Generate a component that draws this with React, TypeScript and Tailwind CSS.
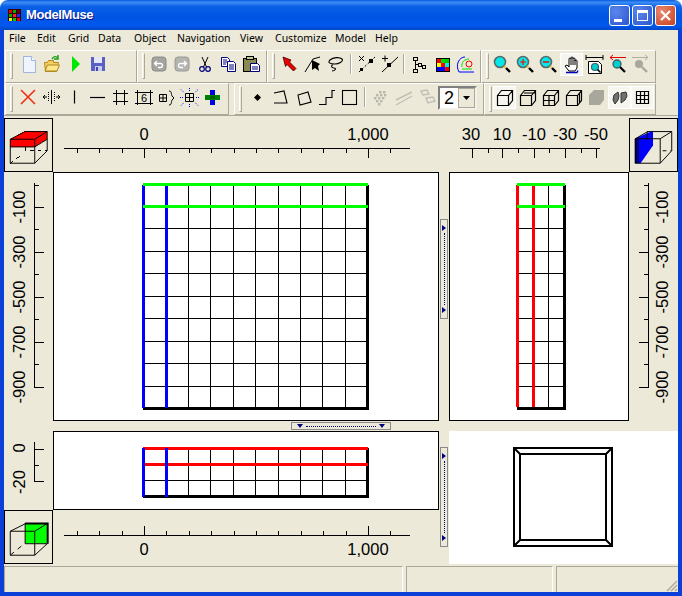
import type { ReactNode } from 'react';

const menuItems: [string, string][] = [
  ['File', 'w-[28px]'],
  ['Edit', 'w-[31px]'],
  ['Grid', 'w-[30px]'],
  ['Data', 'w-[36px]'],
  ['Object', 'w-[43px]'],
  ['Navigation', 'w-[63px]'],
  ['View', 'w-[35px]'],
  ['Customize', 'w-[60px]'],
  ['Model', 'w-[40px]'],
  ['Help', 'w-[30px]'],
];

const blk = { stroke: '#000', fill: 'none' };
const navy = { stroke: '#00007B', fill: 'none' };

function Mag({ lens = '#00E8E8', ring = '#5A6A6A', handle = '#000' }: { lens?: string; ring?: string; handle?: string }) {
  return (
    <>
      <circle cx="9" cy="9" r="5.5" fill={lens} stroke={ring} strokeWidth="1.6" />
      <path d="M13 13l1.5 1.5" stroke="#E8C030" strokeWidth="2" />
      <path d="M15 15l4 4" stroke={handle} strokeWidth="2.4" />
    </>
  );
}

const icons: Record<string, ReactNode> = {
  new: (
    <>
      <path d="M5.5 3.5h8l4 4v12h-12z" fill="#F0F4FD" stroke="#9FB4E0" />
      <path d="M13.5 3.5v4h4" fill="#fff" stroke="#9FB4E0" />
    </>
  ),
  open: (
    <>
      <path d="M3.5 9.5h3l1-2h5v2h5l-2 9h-11z" fill="#F5D060" stroke="#B08A20" />
      <path d="M4 18l2.5-6h12l-2.5 6z" fill="#FBE68A" stroke="#B08A20" />
      <path d="M11 6c2-3 4-3 6-1M17 2v4h-4" stroke="#18A018" strokeWidth="1.4" fill="none" />
    </>
  ),
  run: <polygon points="8,3 16,11 8,19" fill="#00E800" />,
  save: (
    <>
      <path d="M4 4h14v14H4z" fill="#5A60C4" />
      <rect x="7" y="4" width="8" height="6" fill="#E6E8F8" />
      <rect x="8" y="13" width="7" height="5" fill="#C8CCEC" />
      <rect x="9" y="14" width="2" height="4" fill="#4048A8" />
    </>
  ),
  undo: (
    <>
      <rect x="4" y="4" width="14" height="14" rx="3" fill="#A4A4A0" stroke="#8A8A86" />
      <path d="M9 8L6.5 10.5 9 13M7 10.5h5.5a2 2 0 0 1 0 4H10" stroke="#fff" strokeWidth="1.3" fill="none" />
    </>
  ),
  redo: (
    <>
      <rect x="4" y="4" width="14" height="14" rx="3" fill="#B4B4B0" stroke="#9A9A96" />
      <path d="M13 8l2.5 2.5L13 13M15 10.5H9.5a2 2 0 0 0 0 4H12" stroke="#fff" strokeWidth="1.3" fill="none" />
    </>
  ),
  cut: (
    <>
      <path d="M8 4l4.5 10M14 4L9.5 14" {...blk} />
      <circle cx="8" cy="16" r="2.3" {...navy} strokeWidth="1.2" />
      <circle cx="14" cy="16" r="2.3" {...navy} strokeWidth="1.2" />
    </>
  ),
  copy: (
    <>
      <path d="M4.5 4.5h6l2 2v7h-8z" fill="#fff" stroke="#00007B" />
      <path d="M6 7h4M6 9h4M6 11h3" stroke="#00007B" />
      <path d="M10.5 8.5h6l2 2v8h-8z" fill="#fff" stroke="#00007B" />
      <path d="M12 12h5M12 14h5M12 16h5" stroke="#00007B" />
    </>
  ),
  paste: (
    <>
      <rect x="3.5" y="5.5" width="13" height="13" fill="#8A8A50" stroke="#000" />
      <rect x="6.5" y="3.5" width="7" height="3" fill="#C8C8A0" stroke="#000" />
      <path d="M10.5 10.5h7l2 2v6h-9z" fill="#fff" stroke="#00007B" />
      <path d="M12 14h6M12 16h6" stroke="#00007B" />
    </>
  ),
  arrow: <polygon points="5,4 13,7 11.5,9 18,15.5 15.5,18 9,11.5 7.5,13.5" fill="#E80000" stroke="#400000" strokeWidth="0.8" />,
  lineArrow: (
    <>
      <path d="M19 4l-7 2-8 13" {...blk} />
      <polygon points="11,7 11,17 14,15 18,18 17,13 19,11" fill="#000" />
    </>
  ),
  lasso: (
    <path d="M6 7c3-3 10-3 12-1s-3 5-7 5-8-1-5-4zM9 11c-2 2-2 4 1 4s1 3-2 3" {...blk} strokeWidth="1.1" />
  ),
  delVertex: (
    <>
      <path d="M4 19L20 4" stroke="#000" strokeDasharray="2 2" />
      <rect x="5" y="15" width="3" height="3" fill="#000" />
      <rect x="14" y="6" width="4" height="4" fill="#000" />
      <path d="M4 3l5 5M9 3L4 8" {...blk} />
    </>
  ),
  addVertex: (
    <>
      <path d="M4 19L20 4" stroke="#000" />
      <rect x="9" y="10" width="4" height="4" fill="#000" />
      <path d="M4 5.5h6M7 2.5v6" {...blk} />
    </>
  ),
  tree: (
    <>
      <rect x="6.5" y="4.5" width="4" height="3" {...blk} />
      <rect x="11.5" y="10.5" width="3" height="3" {...blk} />
      <rect x="15.5" y="12.5" width="3" height="3" {...blk} />
      <rect x="6.5" y="16.5" width="4" height="3" {...blk} />
      <path d="M8.5 7.5v9M8.5 11.5h3M14.5 13.5h1" {...blk} />
    </>
  ),
  color: (
    <>
      <rect x="6" y="5" width="14" height="14" fill="#000" />
      <rect x="7" y="6" width="4" height="4" fill="#F00" />
      <rect x="11" y="6" width="4" height="4" fill="#0D0" />
      <rect x="15" y="6" width="4" height="4" fill="#0C0" />
      <rect x="7" y="10" width="4" height="4" fill="#FF0" />
      <rect x="11" y="10" width="4" height="4" fill="#F00" />
      <rect x="15" y="10" width="4" height="4" fill="#0EE" />
      <rect x="7" y="14" width="4" height="4" fill="#00F" />
      <rect x="11" y="14" width="4" height="4" fill="#00F" />
      <rect x="15" y="14" width="4" height="4" fill="#E00" />
    </>
  ),
  contour: (
    <>
      <path d="M6 19C2 12 6 4 12 4" stroke="#0000FF" fill="none" />
      <path d="M6 19h15" stroke="#0000FF" />
      <path d="M9 14c-1-5 3-8 7-8M9 16h10" stroke="#00E000" fill="none" />
      <circle cx="16" cy="11" r="3" stroke="#F00" fill="none" />
    </>
  ),
  zoom: <Mag />,
  zoomIn: (
    <>
      <Mag />
      <path d="M6 9h6M9 6v6" stroke="#F00" strokeWidth="1.2" />
    </>
  ),
  zoomOut: (
    <>
      <Mag />
      <path d="M6 9h6" stroke="#F00" strokeWidth="1.4" />
    </>
  ),
  hand: (
    <>
      <path d="M5 13l2-1 2 2V6a1 1 0 0 1 2 0V5a1 1 0 0 1 2 0v1a1 1 0 0 1 2 0v2a1 1 0 0 1 2 0v7l-2 3H9z" fill="#fff" stroke="#000" />
      <path d="M11 6v6M13 6v6M15 7v5" {...blk} />
      <path d="M6 19.5h11l1-2" stroke="#0000C0" fill="none" strokeWidth="1.3" />
    </>
  ),
  zoomExtents: (
    <>
      <path d="M3 4.5h17M3 2v5M20 2v5" {...blk} />
      <path d="M5.5 8.5h10l3 3v9h-13z" fill="#fff" stroke="#000" />
      <circle cx="12" cy="14" r="3.5" fill="#00D0D0" stroke="#406060" strokeWidth="1.2" />
      <path d="M14.5 16.5l3 3" stroke="#000" strokeWidth="1.6" />
    </>
  ),
  zoomPrev: (
    <>
      <path d="M4 4.5h16M7 2L4 4.5 7 7" stroke="#E00000" fill="none" />
      <circle cx="11" cy="11" r="4" fill="#00D0D0" stroke="#406060" strokeWidth="1.3" />
      <path d="M14 14l5 5" stroke="#000" strokeWidth="2.2" />
    </>
  ),
  zoomNext: (
    <>
      <path d="M3 4.5h16M16 2l3 2.5L16 7" stroke="#B0AFA4" fill="none" />
      <circle cx="10" cy="11" r="4" fill="#A8A79C" />
      <path d="M13 14l5 5" stroke="#A8A79C" strokeWidth="2.4" />
    </>
  ),
  del: <path d="M4 4l14 14M18 4L4 18" stroke="#F03010" strokeWidth="1.6" />,
  splitV: (
    <>
      <path d="M11.5 4v14" {...blk} />
      <path d="M8.5 6v10M14.5 6v10" stroke="#000" strokeDasharray="1 1" />
      <path d="M3 11h4M5 9l-2 2 2 2M16 11h4M18 9l2 2-2 2" {...blk} />
    </>
  ),
  vLine: <path d="M11.5 4.5v13" stroke="#000" strokeWidth="1.2" />,
  hLine: <path d="M4 11.5h15" stroke="#000" strokeWidth="1.2" />,
  hash: <path d="M7.5 4v15M15.5 4v15M4 7.5h15M4 15.5h15" {...blk} />,
  gridNum: (
    <>
      <path d="M5.5 4v15M18.5 4v15M3 6.5h18M3 17.5h18" {...blk} />
      <text x="12" y="16" textAnchor="middle" fontSize="11" fontFamily="Liberation Sans">6</text>
    </>
  ),
  gridBrace: (
    <>
      <path d="M4.5 8.5h7v7h-7zM8 8.5v7M4.5 12h7" {...blk} />
      <path d="M14 5c3 0 2 3 3 5l2 2-2 2c-1 2 0 5-3 5" {...blk} />
    </>
  ),
  gridDash: (
    <>
      <path d="M7.5 7.5h8v8h-8zM11.5 7.5v8M7.5 11.5h8" {...blk} />
      <path d="M3 3.5l3 3M20 3.5l-3 3M3 19.5l3-3M20 19.5l-3-3M11.5 2v3M11.5 18v3M2 11.5h3M18 11.5h3" stroke="#0000FF" strokeDasharray="1 1" />
    </>
  ),
  cross: (
    <>
      <rect x="9" y="4" width="5" height="15" fill="#0000E0" />
      <rect x="4" y="9" width="15" height="5" fill="#008000" />
      <rect x="9" y="10" width="5" height="3" fill="#006000" />
    </>
  ),
  dot: <polygon points="11.5,8 15,11.5 11.5,15 8,11.5" fill="#000" />,
  openPoly: <path d="M5 7l10-2 3 12H5" {...blk} strokeWidth="1.1" />,
  closedPoly: <path d="M6 9l10-3 3 10-11 3z" {...blk} strokeWidth="1.1" />,
  step: <path d="M4 18.5h7v-7h6v-7h3" {...blk} strokeWidth="1.1" />,
  square: <rect x="4.5" y="4.5" width="14" height="14" {...blk} strokeWidth="1.1" />,
  grayDots: (
    <g fill="#B8B7AC">
      {[[10, 5], [14, 5], [7, 8], [11, 8], [15, 8], [5, 11], [9, 11], [13, 11], [7, 14], [11, 14], [9, 17]].map(([x, y]) => (
        <rect key={`${x}-${y}`} x={x} y={y} width="2.4" height="2.4" />
      ))}
    </g>
  ),
  grayLines: <path d="M4 14L20 6M4 19L20 10" stroke="#C0BFB4" strokeWidth="1.4" />,
  grayRects: <path d="M6 5l6-1 2 4-6 1zM11 12l7-1 2 4-7 2z" stroke="#C0BFB4" fill="none" strokeWidth="1.4" />,
  cube: (
    <path d="M4.5 9.5h11v10h-11zM4.5 9.5l4-5h11v10l-4 5M15.5 9.5l4-5" {...blk} strokeWidth="1.2" />
  ),
  cubeLeft: (
    <path d="M4.5 9.5h11v10h-11zM4.5 9.5l4-5h11v10l-4 5M15.5 9.5l4-5M8 7h11" {...blk} strokeWidth="1.2" />
  ),
  cubeCross: (
    <path d="M4.5 9.5h11v10h-11zM4.5 9.5l4-5h11v10l-4 5M15.5 9.5l4-5M4.5 14.5h11M10 9.5v10" {...blk} strokeWidth="1.2" />
  ),
  cubeSide: (
    <path d="M4.5 9.5h11v10h-11zM4.5 9.5l4-5h11v10l-4 5M15.5 9.5l4-5M17.5 7v10" {...blk} strokeWidth="1.2" />
  ),
  cubeSolid: <polygon points="4,9 9,4 19,4 19,14 15,19 4,19" fill="#A8A79C" />,
  blob: (
    <path d="M6 9l4-3 1 4-1 4-3 4-2-4zM13 7l5-1 1 4-2 4-4 3v-5z" fill="#707070" stroke="#333" />
  ),
  meshGrid: <path d="M5.5 5.5h12v12h-12zM9.5 5.5v12M13.5 5.5v12M5.5 9.5h12M5.5 13.5h12" {...blk} strokeWidth="1.2" />,
};

function Btn({ icon, pressed }: { icon: string; pressed?: boolean }) {
  return (
    <div className={`w-[23px] h-[23px] shrink-0 ${pressed ? 'bg-[#F6F5EE] outline outline-1 -outline-offset-1 outline-white' : ''}`}>
      <svg viewBox="0 0 23 23" className="w-[23px] h-[23px]">
        {icons[icon]}
      </svg>
    </div>
  );
}

function Grip() {
  return <div className="w-[3px] h-[26px] mt-[2px] shrink-0 border-l border-t border-white border-r border-b border-r-[#ACA899] border-b-[#ACA899]" />;
}

function Sep({ w }: { w: string }) {
  return (
    <div className={`${w} h-[23px] shrink-0 flex justify-center`}>
      <div className="w-[2px] h-[20px] mt-[1px] border-l border-[#ACA899] border-r-white bg-white" />
    </div>
  );
}

function Band({ width, lead, children }: { width: string; lead: string; children: ReactNode }) {
  return (
    <div className={`${width} h-full shrink-0 flex items-start border border-t-white border-l-white border-r-[#ACA899] border-b-[#ACA899]`}>
      <div className={`${lead} h-full shrink-0 pl-[4px]`}>
        <Grip />
      </div>
      <div className="flex items-start mt-[2px]">{children}</div>
    </div>
  );
}

// hand-placed ruler ticks, screen coords via the viewBox
const hTicks = Array.from({ length: 15 }, (_, i) => ({ x: Math.round(144 + 22.4 * (i - 3)), major: i === 3 || i === 13 }));
const sideMajor = [207, 252, 297, 342, 387];
const sideMinor = [185, 229, 274, 319, 364];
const sideLabels: [string, number][] = [['-100', 207], ['-300', 252], ['-500', 297], ['-700', 342], ['-900', 387]];

function SideLabel({ x, y, children }: { x: number; y: number; children: string }) {
  return (
    <text x={x} y={y} transform={`rotate(-90 ${x} ${y})`} textAnchor="middle" fontSize="16.5">
      {children}
    </text>
  );
}

function Cube({ kind }: { kind: 'top' | 'side' | 'front' }) {
  if (kind === 'top') {
    return (
      <svg viewBox="4 118 49 53" className="w-full h-full" shapeRendering="crispEdges">
        <path d="M9.5 138.5h25.5v8H9.5z" fill="#F00" />
        <polygon points="9.5,138 25,130 48,130 48,138 35,146.5 35,138" fill="#F00" />
        <path d="M9.5 138.5h25.5v25H9.5zM9.5 138.5L25 130.5h23v20L35 163.5M35 138.5L48 130.5M9.5 146.5H35M35 146.5l13-8" fill="none" stroke="#000" shapeRendering="auto" />
        <path d="M9.5 163.5L21 155M25.5 147v3.5h22" fill="none" stroke="#000" strokeDasharray="4 4" />
      </svg>
    );
  }
  if (kind === 'side') {
    return (
      <svg viewBox="629 118 49 53" className="w-full h-full" shapeRendering="auto">
        <polygon points="634,138 652,130 653,130 653,145 640,163.5 634,163.5" fill="#00F" />
        <path d="M635 138v25.5" fill="none" stroke="#000" strokeWidth="2" />
        <path d="M637.5 137v26" fill="none" stroke="#000" />
        <path d="M634.5 138h26v25.5h-26M647 130.5h25.5v20L660.5 163.5M660.5 138l12-7.5M634.5 138l13-7.5M647 130.5v8" fill="none" stroke="#000" />
        <path d="M663 150.5h9" fill="none" stroke="#000" strokeDasharray="4 4" />
      </svg>
    );
  }
  return (
    <svg viewBox="4 510 49 53" className="w-full h-full" shapeRendering="auto">
      <rect x="25" y="522" width="23" height="21" fill="#0F0" />
      <path d="M25 522.5h23.5v21" fill="none" stroke="#000" strokeWidth="2" />
      <path d="M25 522v21.5h23" fill="none" stroke="#000" />
      <path d="M9.5 530.5h25.5v25H9.5zM9.5 530.5l16-8M35 530.5l13-8M35 555.5l13-12" fill="none" stroke="#000" />
      <path d="M9.5 555.5L21 546" fill="none" stroke="#000" strokeDasharray="5 5" />
    </svg>
  );
}

function VHandle() {
  return (
    <div className="w-[8px] h-[100px] ml-[1px] border border-[#8A8A8A] bg-[#ECE9D8] flex flex-col items-center justify-between py-[5px]">
      <svg viewBox="0 0 4 6" className="w-[4px] h-[6px] shrink-0">
        <polygon points="0,0 4,3 0,6" fill="#00007B" />
      </svg>
      <div className="flex-1 border-l border-dotted border-[#00007B] my-[2px]" />
      <svg viewBox="0 0 4 6" className="w-[4px] h-[6px] shrink-0">
        <polygon points="0,0 4,3 0,6" fill="#00007B" />
      </svg>
    </div>
  );
}

function HHandle() {
  return (
    <div className="w-[100px] h-[8px] mt-[1px] ml-[287px] border border-[#8A8A8A] bg-[#ECE9D8] flex items-center justify-between px-[5px]">
      <svg viewBox="0 0 6 4" className="w-[6px] h-[4px] shrink-0">
        <polygon points="0,0 6,0 3,4" fill="#00007B" />
      </svg>
      <div className="flex-1 border-t border-dotted border-[#00007B] mx-[3px]" />
      <svg viewBox="0 0 6 4" className="w-[6px] h-[4px] shrink-0">
        <polygon points="0,0 6,0 3,4" fill="#00007B" />
      </svg>
    </div>
  );
}

const gridYs = [228, 251, 273, 296, 318, 341, 363, 386];
const gridXs = [188, 210, 233, 255, 278, 300, 322, 345];

export default function App() {
  return (
    <div className="w-[682px] h-[596px] bg-white flex flex-col overflow-hidden font-['Liberation_Sans',sans-serif] text-black">
      {/* title bar */}
      <div className="h-[30px] shrink-0 rounded-t-[8px] flex items-center pl-[7px] pr-[6px] bg-[linear-gradient(180deg,#0A5CDC_0%,#3C8CF6_8%,#0A5FE6_22%,#0054E3_55%,#0058EE_85%,#0046C8_100%)]">
        <svg viewBox="0 0 16 14" className="w-[16px] h-[14px] shrink-0" shapeRendering="crispEdges">
          <rect x="1" y="1" width="13" height="12" fill="#300" />
          <rect x="2" y="2" width="3" height="3" fill="#E00" />
          <rect x="6" y="2" width="3" height="3" fill="#0A0" />
          <rect x="10" y="2" width="3" height="3" fill="#600" />
          <rect x="2" y="6" width="3" height="3" fill="#0A0" />
          <rect x="6" y="6" width="3" height="3" fill="#F22" />
          <rect x="10" y="6" width="3" height="3" fill="#22E" />
          <rect x="2" y="10" width="3" height="3" fill="#FE0" />
          <rect x="6" y="10" width="3" height="3" fill="#0C0" />
          <rect x="10" y="10" width="3" height="3" fill="#E00" />
        </svg>
        <span className="ml-[3px] flex-1 text-white font-bold text-[13px] tracking-[-0.4px] [text-shadow:1px_1px_#0F1089]">ModelMuse</span>
        <div className="flex gap-[2px] items-center">
          <div className="w-[21px] h-[21px] rounded-[3px] border border-white bg-[radial-gradient(circle_at_30%_30%,#5C86EC,#2A55CE)] flex items-end pl-[4px] pb-[3px]">
            <div className="w-[8px] h-[3px] bg-white" />
          </div>
          <div className="w-[21px] h-[21px] rounded-[3px] border border-white bg-[radial-gradient(circle_at_30%_30%,#5C86EC,#2A55CE)] flex items-center justify-center">
            <div className="w-[11px] h-[11px] border border-white border-t-[3px]" />
          </div>
          <div className="w-[21px] h-[21px] rounded-[3px] border border-white bg-[radial-gradient(circle_at_30%_30%,#E88A70,#C8401E)] flex items-center justify-center">
            <svg viewBox="0 0 11 11" className="w-[11px] h-[11px]">
              <path d="M1 1l9 9M10 1l-9 9" stroke="#fff" strokeWidth="2.2" />
            </svg>
          </div>
        </div>
      </div>

      <div className="flex-1 flex flex-col min-h-0 bg-[#ECE9D8] border-x-4 border-b-4 border-[#0A3FD8]">
        {/* menu */}
        <div className="h-[20px] shrink-0 flex items-center pl-[5px] pb-[2px] text-[10.5px] font-['Noto_Sans',sans-serif]">
          {menuItems.map(([label, w]) => (
            <span key={label} className={`${w} shrink-0`}>{label}</span>
          ))}
        </div>

        {/* toolbars */}
        <div className="h-[33px] shrink-0 flex pl-[1px]">
          <Band width="w-[132px]" lead="w-[12px]">
            {['new', 'open', 'run', 'save'].map((i) => <Btn key={i} icon={i} />)}
          </Band>
          <Band width="w-[130px]" lead="w-[10px]">
            {['undo', 'redo', 'cut', 'copy', 'paste'].map((i) => <Btn key={i} icon={i} />)}
          </Band>
          <Band width="w-[214px]" lead="w-[10px]">
            <Btn icon="arrow" />
            <Btn icon="lineArrow" />
            <Btn icon="lasso" />
            <Sep w="w-[8px]" />
            <Btn icon="delVertex" />
            <Btn icon="addVertex" />
            <Sep w="w-[6px]" />
            <Btn icon="tree" />
            <Btn icon="color" />
            <Btn icon="contour" />
          </Band>
          <Band width="w-[175px]" lead="w-[9px]">
            <Btn icon="zoom" />
            <Btn icon="zoomIn" />
            <Btn icon="zoomOut" />
            <Btn icon="hand" pressed />
            <Btn icon="zoomExtents" />
            <Btn icon="zoomPrev" />
            <Btn icon="zoomNext" />
          </Band>
        </div>
        <div className="h-[33px] shrink-0 flex pl-[1px] border-b border-[#ACA899]">
          <Band width="w-[224px]" lead="w-[11px]">
            {['del', 'splitV', 'vLine', 'hLine', 'hash', 'gridNum', 'gridBrace', 'gridDash', 'cross'].map((i) => <Btn key={i} icon={i} />)}
          </Band>
          <div className="w-[5px] shrink-0" />
          <Band width="w-[250px]" lead="w-[11px]">
            {['dot', 'openPoly', 'closedPoly', 'step', 'square'].map((i) => <Btn key={i} icon={i} />)}
            <Sep w="w-[8px]" />
            {['grayDots', 'grayLines', 'grayRects'].map((i) => <Btn key={i} icon={i} />)}
            <div className="w-[39px] h-[24px] shrink-0 border-2 border-[#808080] border-r-[#F4F2E8] border-b-[#F4F2E8] bg-white flex">
              <span className="flex-1 pl-[4px] text-[18px] leading-[20px]">2</span>
              <div className="w-[17px] bg-[#ECE9D8] border border-[#ACA899] flex items-center justify-center">
                <svg viewBox="0 0 7 4" className="w-[7px] h-[4px]">
                  <polygon points="0,0 7,0 3.5,4" fill="#000" />
                </svg>
              </div>
            </div>
          </Band>
          <Band width="w-[172px]" lead="w-[8px]">
            <Btn icon="cube" pressed />
            <Btn icon="cubeLeft" />
            <Btn icon="cubeCross" />
            <Btn icon="cubeSide" />
            <Btn icon="cubeSolid" />
            <Btn icon="blob" pressed />
            <Btn icon="meshGrid" pressed />
          </Band>
        </div>

        {/* views */}
        <div className="h-[446px] shrink-0 mt-[2px] grid grid-cols-[49px_386px_10px_180px_49px] grid-rows-[54px_249px_10px_79px_54px]">
          <div className="border border-black">
            <Cube kind="top" />
          </div>
          <div className="col-span-2">
            <svg viewBox="53 118 396 54" className="w-full h-full">
              <g shapeRendering="crispEdges">
                <rect x="64" y="148" width="346" height="1" />
                {hTicks.map((t) => (
                  <rect key={t.x} x={t.x} y="148" width="1" height={t.major ? 10 : 5} />
                ))}
              </g>
              <text x="144" y="140" textAnchor="middle" fontSize="16.5">0</text>
              <text x="368" y="140" textAnchor="middle" fontSize="16.5">1,000</text>
            </svg>
          </div>
          <div>
            <svg viewBox="449 118 180 54" className="w-full h-full">
              <g shapeRendering="crispEdges">
                <rect x="460" y="148" width="140" height="1" />
                {[472, 502, 534, 565, 596].map((x) => <rect key={x} x={x} y="148" width="1" height="10" />)}
                {[488, 518, 549, 581].map((x) => <rect key={x} x={x} y="148" width="1" height="5" />)}
              </g>
              {[['30', 471], ['10', 502], ['-10', 534], ['-30', 565], ['-50', 596]].map(([l, x]) => (
                <text key={l} x={x} y="140" textAnchor="middle" fontSize="16.5">{l}</text>
              ))}
            </svg>
          </div>
          <div className="border border-black">
            <Cube kind="side" />
          </div>

          {/* left ruler */}
          <div>
            <svg viewBox="4 172 49 249" className="w-full h-full">
              <g shapeRendering="crispEdges">
                <rect x="34" y="183" width="1" height="205" />
                {sideMajor.map((y) => <rect key={y} x="34" y={y} width="10" height="1" />)}
                {sideMinor.map((y) => <rect key={y} x="34" y={y} width="5" height="1" />)}
              </g>
              {sideLabels.map(([l, y]) => <SideLabel key={l} x={25} y={y}>{l}</SideLabel>)}
            </svg>
          </div>

          {/* top view */}
          <div className="bg-white border border-black">
            <svg viewBox="54 173 384 247" className="w-full h-full" shapeRendering="crispEdges">
              {gridXs.map((x) => <rect key={x} x={x} y="185" width="1" height="223" />)}
              {gridYs.map((y) => <rect key={y} x="143" y={y} width="224" height="1" />)}
              <rect x="366" y="185" width="3" height="225" />
              <rect x="143" y="407" width="226" height="3" />
              <rect x="142" y="185" width="3" height="223" fill="#00F" />
              <rect x="165" y="185" width="3" height="223" fill="#00F" />
              <rect x="143" y="183" width="225" height="3" fill="#0F0" />
              <rect x="143" y="205" width="225" height="3" fill="#0F0" />
            </svg>
          </div>

          <div className="pt-[47px]">
            <VHandle />
          </div>

          {/* side view */}
          <div className="bg-white border border-black">
            <svg viewBox="450 173 178 247" className="w-full h-full" shapeRendering="crispEdges">
              <rect x="548" y="185" width="1" height="223" />
              {gridYs.map((y) => <rect key={y} x="517" y={y} width="47" height="1" />)}
              <rect x="563" y="185" width="3" height="225" />
              <rect x="517" y="407" width="49" height="3" />
              <rect x="516" y="185" width="3" height="222" fill="#F00" />
              <rect x="532" y="185" width="3" height="222" fill="#F00" />
              <rect x="517" y="183" width="48" height="3" fill="#0F0" />
              <rect x="517" y="205" width="48" height="3" fill="#0F0" />
            </svg>
          </div>

          {/* right ruler */}
          <div>
            <svg viewBox="629 172 49 249" className="w-full h-full">
              <g shapeRendering="crispEdges">
                <rect x="648" y="183" width="1" height="205" />
                {sideMajor.map((y) => <rect key={y} x="639" y={y} width="10" height="1" />)}
                {sideMinor.map((y) => <rect key={y} x="644" y={y} width="5" height="1" />)}
              </g>
              {sideLabels.map(([l, y]) => <SideLabel key={l} x={668} y={y}>{l}</SideLabel>)}
            </svg>
          </div>

          <div className="col-span-5">
            <HHandle />
          </div>

          {/* bottom ruler, left */}
          <div>
            <svg viewBox="4 431 49 79" className="w-full h-full">
              <g shapeRendering="crispEdges">
                <rect x="34" y="442" width="1" height="40" />
                <rect x="34" y="449" width="10" height="1" />
                <rect x="34" y="465" width="5" height="1" />
                <rect x="34" y="481" width="10" height="1" />
              </g>
              <SideLabel x={25} y={448}>0</SideLabel>
              <SideLabel x={25} y={482}>-20</SideLabel>
            </svg>
          </div>

          {/* front view */}
          <div className="bg-white border border-black">
            <svg viewBox="54 432 384 77" className="w-full h-full" shapeRendering="crispEdges">
              {gridXs.map((x) => <rect key={x} x={x} y="448" width="1" height="48" />)}
              <rect x="143" y="480" width="224" height="1" />
              <rect x="366" y="448" width="3" height="50" />
              <rect x="143" y="495" width="226" height="3" />
              <rect x="143" y="447" width="225" height="3" fill="#F00" />
              <rect x="143" y="463" width="225" height="3" fill="#F00" />
              <rect x="142" y="448" width="3" height="49" fill="#00F" />
              <rect x="165" y="448" width="3" height="49" fill="#00F" />
            </svg>
          </div>

          <div className="row-span-2 pt-[16px]">
            <VHandle />
          </div>

          {/* 3d view */}
          <div className="col-span-2 row-span-2 bg-white">
            <svg viewBox="449 431 229 133" className="w-full h-full" shapeRendering="crispEdges">
              <rect x="514" y="448" width="98" height="98" fill="none" stroke="#000" strokeWidth="2" />
              <rect x="520" y="454" width="86" height="86" fill="none" stroke="#000" strokeWidth="2" />
              <path d="M514 448l6 6M612 448l-6 6M514 546l6-6M612 546l-6-6" stroke="#000" strokeWidth="2" shapeRendering="auto" />
            </svg>
          </div>

          <div className="border border-black">
            <Cube kind="front" />
          </div>
          <div>
            <svg viewBox="53 510 386 54" className="w-full h-full">
              <g shapeRendering="crispEdges">
                <rect x="64" y="535" width="346" height="1" />
                {hTicks.map((t) => (
                  <rect key={t.x} x={t.x} y={t.major ? 526 : 531} width="1" height={t.major ? 9 : 4} />
                ))}
              </g>
              <text x="144" y="555" textAnchor="middle" fontSize="16.5">0</text>
              <text x="368" y="555" textAnchor="middle" fontSize="16.5">1,000</text>
            </svg>
          </div>
        </div>

        {/* status bar */}
        <div className="flex-1 mt-[2px] flex gap-[3px] min-h-0">
          <div className="w-[399px] border-t border-l border-[#ACA899] border-r-white border-r" />
          <div className="w-[147px] border-t border-l border-[#ACA899] border-r-white border-r" />
          <div className="flex-1 border-t border-l border-[#ACA899] relative overflow-hidden">
            <svg viewBox="0 0 14 14" className="absolute right-0 bottom-0 w-[14px] h-[14px]">
              <path d="M13 3L3 13M13 7L7 13M13 11L11 13" stroke="#ACA899" strokeWidth="1.4" />
            </svg>
          </div>
        </div>
      </div>
    </div>
  );
}
